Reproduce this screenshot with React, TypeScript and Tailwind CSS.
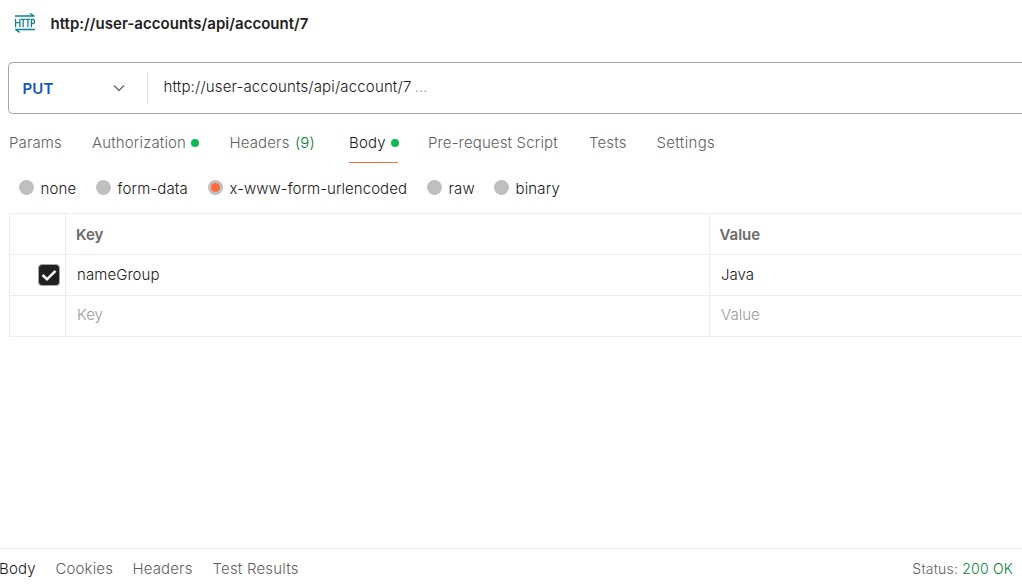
import React from "react";

function HttpIcon() {
  return (
    <svg width="22" height="22" viewBox="0 0 22 22" fill="none" stroke="#0b8296" className="shrink-0">
      <path d="M1 4H20.5M15.8 1.2L20 4" strokeWidth="1.3" />
      <path d="M21 17.5H1.2M1.5 17.5L5.7 20.4" strokeWidth="1.3" />
      <path
        d="M1.6 6.7V15.3M5.9 6.7V15.3M1.6 10.7H5.9M7 7.3H11.3M9.2 7.3V15.3M11.8 7.3H16M13.9 7.3V15.3M17.4 15.3V7.3H18.6C21.2 7.3 21.2 11.7 18.6 11.7H17.4"
        strokeWidth="1.25"
      />
    </svg>
  );
}

function Dot() {
  return <span className="size-2 shrink-0 rounded-full bg-[#0cbb52]" />;
}

function Radio({ label, checked, className }: { label: string; checked?: boolean; className: string }) {
  return (
    <div role="radio" aria-checked={!!checked} className={`flex shrink-0 items-center ${className}`}>
      <span className="mr-[6.5px] -mt-[3px] flex size-[15px] shrink-0 items-center justify-center rounded-full bg-[#bfbfbf]">
        {checked && <span className="size-[9px] rounded-full bg-[#ff6c37]" />}
      </span>
      <span className="whitespace-nowrap">{label}</span>
    </div>
  );
}

function Row({ children }: { children: React.ReactNode }) {
  return <div className="flex h-[41px] border-b border-[#ededed]">{children}</div>;
}

const first = "flex w-[57px] shrink-0 items-center border-x border-[#ededed] pl-7";

export default function App() {
  return (
    <div className="flex h-[587px] w-[1022px] flex-col overflow-hidden bg-white font-['Inter',sans-serif] text-[15px] leading-5 font-light tracking-[0.14px] text-[#181818]">
      <header className="flex h-[62px] items-start pt-3 pl-[14px]">
        <HttpIcon />
        <h1 className="mt-[2px] ml-[14.5px] text-[15px] font-semibold tracking-[0.03px] text-[#212121]">http://user-accounts/api/account/7</h1>
      </header>

      <div className="ml-2 flex h-[52px] shrink-0 rounded-l-[5px] border border-r-0 border-[#a6a6a6]">
        <button className="flex w-[138px] items-center pl-[13.5px] font-semibold tracking-[0.1px] text-[#0f55c0]">
          <span className="w-[90.5px] pt-px text-left">PUT</span>
          <svg width="12" height="8" viewBox="0 0 12 8" fill="none" stroke="#6b6b6b" strokeWidth="1.4">
            <path d="M1 1.5L6 6.5L11 1.5" />
          </svg>
        </button>
        <div className="mt-[9px] h-8 border-l border-[#e1e1e1]" />
        <div className="pt-[14px] pl-[15.5px] tracking-[0.16px]">
          http://user-accounts/api/account/7<span className="ml-[3px] text-[#999999]">...</span>
        </div>
      </div>

      <nav className="flex h-[49px] shrink-0 pt-[19px] pl-[9px] whitespace-nowrap text-[#5f5f5f]">
        <span className="w-[83px] shrink-0">Params</span>
        <span className="flex h-5 w-[137.5px] shrink-0 items-center"><span className="w-[99px]">Authorization</span><Dot /></span>
        <span className="w-[119.5px] shrink-0">Headers <span className="ml-px text-[#007f31]">(9)</span></span>
        <span className="mr-[30px] flex h-[30px] w-[49px] shrink-0 border-b border-[#ff6c37] text-[#181818]">
          <span className="flex h-5 items-center"><span className="w-[41.5px]">Body</span><Dot /></span>
        </span>
        <span className="w-[161px] shrink-0">Pre-request Script</span>
        <span className="w-[67.5px] shrink-0">Tests</span>
        <span className="tracking-[0.35px]">Settings</span>
      </nav>

      <div role="radiogroup" className="flex h-[50px] shrink-0 items-center pt-px pl-[19px]">
        <Radio label="none" className="w-[77px]" />
        <Radio label="form-data" className="w-[112px]" />
        <Radio label="x-www-form-urlencoded" checked className="w-[219px] tracking-[0.05px]" />
        <Radio label="raw" className="w-[67px]" />
        <Radio label="binary" className="w-[80px]" />
      </div>

      <section className="ml-[9px] shrink-0 border-t border-[#ededed]">
        <Row>
          <div className={first} />
          <div className="flex w-[643px] shrink-0 items-center pt-[2px] pl-[10px] font-semibold tracking-normal text-[#6b6b6b]">Key</div>
          <div className="flex flex-1 items-center border-l border-[#ededed] pt-[2px] pl-[9.5px] font-semibold tracking-normal text-[#6b6b6b]">Value</div>
        </Row>
        <Row>
          <div className={first}>
            <span role="checkbox" aria-checked="true" className="flex size-[22px] shrink-0 items-center justify-center rounded-[4px] border border-[#a6a6a6] bg-[#212121]">
              <svg width="16" height="14" viewBox="0 0 16 14" fill="none" stroke="white" strokeWidth="2.6" className="shrink-0">
                <path d="M1.5 7L6 11.3L14.5 2.8" />
              </svg>
            </span>
          </div>
          <div className="flex w-[643px] shrink-0 items-center pl-[11px] tracking-[0.08px]">nameGroup</div>
          <div className="flex flex-1 items-center border-l border-[#ededed] pl-[11px] tracking-[0.03px]">Java</div>
        </Row>
        <Row>
          <div className={first} />
          <div className="flex w-[643px] shrink-0 items-center pb-[2px] pl-[11px] tracking-[0.05px] text-[#999999]">Key</div>
          <div className="flex flex-1 items-center border-l border-[#ededed] pb-[2px] pl-[11px] tracking-[0.05px] text-[#999999]">Value</div>
        </Row>
      </section>

      <footer className="mt-auto flex h-[39px] shrink-0 border-t border-[#ededed] pt-[10px] whitespace-nowrap text-[#5f5f5f]">
        <span className="-ml-px w-[56.5px] shrink-0 text-[#181818]">Body</span>
        <span className="w-[77px] shrink-0">Cookies</span>
        <span className="w-[80px] shrink-0">Headers</span>
        <span className="tracking-[0.18px]">Test Results</span>
        <span className="mr-[9px] ml-auto text-sm leading-5 tracking-[0.2px]">Status: <span className="text-[#007f31]">200 OK</span></span>
      </footer>
    </div>
  );
}
